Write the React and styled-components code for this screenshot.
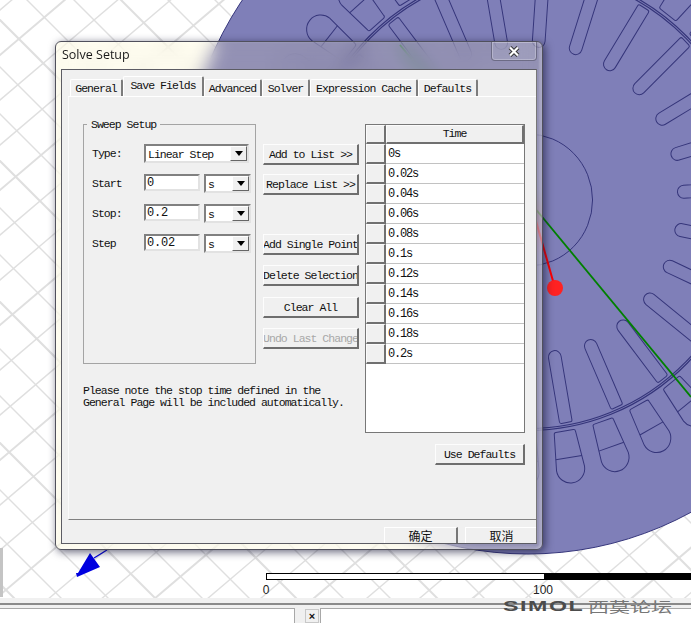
import React from 'react';
import styled, { createGlobalStyle } from 'styled-components';

const GlobalStyle = createGlobalStyle`
  html, body {
    margin: 0;
    padding: 0;
    background: #fff;
    overflow: hidden;
  }
`;

const UI_FONT = `"Liberation Mono", "Noto Sans CJK SC", monospace`;

const Screen = styled.div`
  width: 691px;
  height: 623px;
  display: flex;
  flex-direction: column;
  overflow: hidden;
  font-family: ${UI_FONT};
  font-size: 11.5px;
  letter-spacing: -0.97px;
  color: #111;
`;

const Viewport = styled.div`
  position: relative;
  height: 598px;
  flex: none;
  background: #fff;
  overflow: hidden;
`;

const ModelDrawing = styled.svg`
  display: block;
  width: 691px;
  height: 598px;
`;

const SideStub = styled.div`
  position: absolute;
  left: 0;
  top: 548px;
  width: 3px;
  height: 49px;
  background: #c4c4c4;
`;

const Scale = styled.div`
  position: absolute;
  left: 266px;
  top: 573px;
  width: 425px;
`;

const ScaleBar = styled.div`
  display: flex;
  height: 7px;
  box-sizing: border-box;
  border: 1px solid #000;
  border-right: none;
  background: #fff;
`;

const ScaleFill = styled.div`
  margin-left: 277px;
  flex: 1;
  background: #000;
`;

const ScaleLabels = styled.div`
  display: flex;
  width: 277px;
  justify-content: space-between;
  margin-top: 3px;
  font-family: "Liberation Sans", sans-serif;
  font-size: 12px;
  letter-spacing: 0;
  line-height: 14px;
  color: #222;
`;

const ScaleLabel = styled.span`
  transform: translateX(-50%);
  &:last-child { transform: translateX(50%); }
`;

const Dialog = styled.div`
  position: absolute;
  left: 55px;
  top: 41px;
  width: 488px;
  height: 509px;
  box-sizing: border-box;
  padding: 27px 5px 5px 5px;
  border: 1px solid #50505c;
  border-radius: 6px;
  background: rgba(255, 242, 160, 0.16);
  backdrop-filter: blur(9px);
  box-shadow: 2px 2px 8px rgba(20, 20, 50, 0.65), inset -3px 0 2px rgba(255, 255, 255, 0.2), inset 0 -3px 2px rgba(255, 255, 255, 0.12);
`;

const Title = styled.div`
  position: absolute;
  left: 6px;
  top: 4px;
  font-family: "Open Sans", "Noto Sans", sans-serif;
  font-size: 12.5px;
  letter-spacing: 0;
  line-height: 17px;
  color: #1a1a1a;
`;

const CloseButton = styled.div`
  position: absolute;
  right: 5px;
  top: 0;
  width: 46px;
  height: 19px;
  box-sizing: border-box;
  display: flex;
  align-items: center;
  justify-content: center;
  border: 1px solid rgba(70, 70, 90, 0.55);
  border-top: none;
  border-radius: 0 0 4px 4px;
  background: rgba(255, 255, 255, 0.1);
  box-shadow: inset 0 0 0 1px rgba(255, 255, 255, 0.25);
`;

const Client = styled.div`
  height: 100%;
  box-sizing: border-box;
  display: flex;
  flex-direction: column;
  padding: 6px 0 0 6px;
  background: #f0f0f0;
  border: 1px solid #5c5c64;
  border-right-color: #777;
  overflow: hidden;
`;

const TabStrip = styled.div`
  display: flex;
  align-items: flex-end;
  height: 20px;
  flex: none;
  padding-left: 2px;
`;

const Tab = styled.div`
  box-sizing: border-box;
  width: ${(p) => p.$width}px;
  height: ${(p) => (p.$active ? 20 : 17)}px;
  display: flex;
  align-items: ${(p) => (p.$active ? 'flex-start' : 'center')};
  justify-content: center;
  padding-top: ${(p) => (p.$active ? 2 : 0)}px;
  white-space: nowrap;
  border-top: 1px solid #fff;
  border-left: 1px solid #fff;
  border-right: 2px solid #7c7c7c;
  border-radius: 2px 2px 0 0;
`;

const TabPage = styled.div`
  height: 424px;
  flex: none;
  box-sizing: border-box;
  padding: 27px 0 0 14px;
  display: flex;
  border-top: 1px solid #fff;
  border-left: 1px solid #fafafa;
  border-bottom: 1px solid #808080;
`;

const LeftSide = styled.div`
  width: 276px;
  flex: none;
`;

const TopRow = styled.div`
  display: flex;
  gap: 7px;
`;

const Group = styled.div`
  position: relative;
  width: 173px;
  height: 240px;
  box-sizing: border-box;
  padding: 19px 0 0 8px;
  display: flex;
  flex-direction: column;
  gap: 10px;
  border: 1px solid #a4a4a4;
`;

const GroupLegend = styled.span`
  position: absolute;
  left: 3px;
  top: -7px;
  padding: 0 4px;
  background: #f0f0f0;
  line-height: 13px;
`;

const FieldRow = styled.div`
  display: flex;
  height: 20px;
`;

const FieldLabel = styled.label`
  width: 52px;
  flex: none;
  line-height: 20px;
`;

const Sunken = styled.div`
  box-sizing: border-box;
  background: #fff;
  border: 2px solid;
  border-color: #808080 #e2e2e2 #e2e2e2 #808080;
`;

const TextInput = styled(Sunken)`
  width: 56px;
  height: 17px;
  padding-left: 1px;
  line-height: 15px;
  font-size: 12px;
  letter-spacing: -0.2px;
`;

const Combo = styled(Sunken)`
  position: relative;
  width: ${(p) => p.$width}px;
  height: 19px;
  margin-left: ${(p) => p.$gap || 0}px;
  padding-left: 2px;
  line-height: 17px;
`;

const ComboArrow = styled.span`
  position: absolute;
  right: 0;
  top: 0;
  width: 17px;
  height: 15px;
  box-sizing: border-box;
  display: flex;
  align-items: center;
  justify-content: center;
  background: #f0f0f0;
  border: 1px solid;
  border-color: #fff #666 #666 #fff;
  &::after {
    content: '';
    border-style: solid;
    border-width: 5px 4px 0 4px;
    border-color: #000 transparent transparent transparent;
  }
`;

const ActionColumn = styled.div`
  width: 96px;
  padding-top: 20px;
  display: flex;
  flex-direction: column;
`;

const ActionButton = styled.div`
  box-sizing: border-box;
  width: ${(p) => p.$width || 96}px;
  height: 21px;
  flex: none;
  margin-top: ${(p) => p.$gap || 0}px;
  display: flex;
  align-items: center;
  justify-content: center;
  overflow: hidden;
  white-space: nowrap;
  color: ${(p) => (p.$disabled ? '#a8a8a8' : '#111')};
  background: #f0f0f0;
  border: 1px solid;
  border-color: #fdfdfd #6e6e6e #6e6e6e #fdfdfd;
  border-bottom-width: 2px;
  border-right-width: 2px;
`;

const Note = styled.p`
  margin: 21px 0 0;
  line-height: 12px;
  white-space: nowrap;
`;

const RightSide = styled.div`
  margin-left: 6px;
  width: 160px;
  flex: none;
  display: flex;
  flex-direction: column;
  align-items: flex-end;
`;

const TimeTable = styled.div`
  width: 160px;
  height: 309px;
  box-sizing: border-box;
  background: #fff;
  border: 1px solid #777;
`;

const TableRow = styled.div`
  display: flex;
  height: ${(p) => (p.$head ? 19 : 20)}px;
  box-sizing: border-box;
`;

const HeadCell = styled.div`
  box-sizing: border-box;
  background: #f0f0f0;
  border: 1px solid;
  border-color: #fbfbfb #707070 #707070 #fbfbfb;
  border-right-width: 2px;
  border-bottom-width: 2px;
  ${(p) => (p.$wide
    ? 'flex: 1; display: flex; align-items: center; justify-content: center; padding-bottom: 2px;'
    : 'width: 20px; flex: none;')}
`;

const TimeCell = styled.div`
  flex: 1;
  box-sizing: border-box;
  padding-left: 2px;
  line-height: 21px;
  font-size: 12px;
  letter-spacing: -1.2px;
  border-bottom: 1px solid #c2c2c2;
`;

const Footer = styled.div`
  flex: 1;
  display: flex;
  padding: 7px 0 0 316px;
  gap: 7px;
`;

const FooterButton = styled.div`
  width: ${(p) => p.$width}px;
  height: 30px;
  flex: none;
  box-sizing: border-box;
  text-align: center;
  font-family: "Noto Sans CJK SC", sans-serif;
  font-size: 12px;
  letter-spacing: 0;
  line-height: 15px;
  border-top: 1px solid #fff;
  border-left: 1px solid #fff;
  border-right: 2px solid #777;
`;

const BottomDock = styled.div`
  position: relative;
  flex: 1;
  background: #f0f0f0;
  padding-top: 5px;
`;

const DockRule = styled.div`
  height: 2px;
  background: #8a8a8a;
`;

const DockPanes = styled.div`
  display: flex;
  height: 20px;
  margin-top: 3px;
`;

const LeftPane = styled.div`
  width: 295px;
  flex: none;
  box-sizing: border-box;
  background: #fff;
  border-top: 1px solid #a8a8a8;
  border-right: 1px solid #a8a8a8;
`;

const DockClose = styled.div`
  width: 14px;
  height: 14px;
  margin: 1px 1px 0 10px;
  flex: none;
  box-sizing: border-box;
  text-align: center;
  font-family: "Liberation Sans", sans-serif;
  font-weight: bold;
  font-size: 11px;
  letter-spacing: 0;
  line-height: 12px;
  border: 1px solid #c8c8c8;
`;

const RightPane = styled.div`
  flex: 1;
  background: #fff;
  border-top: 1px solid #a8a8a8;
  border-left: 1px solid #a8a8a8;
`;

const Watermark = styled.div`
  position: absolute;
  left: 503px;
  top: 1px;
  display: flex;
  align-items: center;
  height: 14px;
`;

const WatermarkLatin = styled.span`
  width: 85px;
  font-family: "Liberation Sans", sans-serif;
  font-weight: bold;
  font-size: 15px;
  letter-spacing: 1px;
  line-height: 14px;
  color: #4c4c4c;
  transform: scaleX(1.55);
  transform-origin: left center;
`;

const WatermarkCjk = styled.span`
  font-family: "Noto Sans CJK SC", sans-serif;
  font-size: 14px;
  letter-spacing: 0;
  line-height: 14px;
  color: #777;
  transform: scaleX(1.5);
  transform-origin: left center;
`;

// the motor is seen slightly from the side, so its circles are ellipses
const CX = 528;
const CY = 200;
const SQUASH = 0.978;

const gridLines = [];
for (let i = -12; i < 32; i++) {
  const c = i * 47 + 20;
  gridLines.push({ x1: -20, y1: -20 + c, x2: 720, y2: 720 + c, w: i % 3 === 0 ? 2 : 1.4 });
}
for (let i = 0; i < 36; i++) {
  const c = i * 45 + 10;
  gridLines.push({ x1: -20, y1: c + 17, x2: 720, y2: c - 612, w: i % 3 === 1 ? 2 : 1.4 });
}

const rotorAngles = Array.from({ length: 26 }, (_, i) => 17.8 + i * 13.846);
const statorAngles = Array.from({ length: 37 }, (_, i) => 170.8 + (i - 6) * 9.86);

function Model() {
  return (
    <ModelDrawing viewBox="0 0 691 598">
      <g stroke="#dfdfdf" fill="none">
        {gridLines.map((l, i) => (
          <line key={i} x1={l.x1} y1={l.y1} x2={l.x2} y2={l.y2} strokeWidth={l.w} />
        ))}
      </g>
      <g transform={`translate(${CX} ${CY}) scale(${SQUASH} 1)`} fill="none" stroke="#35357a" strokeWidth="1">
        <circle r="354" fill="#7f7fb8" />
        <circle r="66" />
        <circle r="228.5" strokeWidth="1.2" />
        <circle r="230.5" strokeWidth="1.2" />
        {rotorAngles.map((a) => (
          <path
            key={a}
            transform={`rotate(${a})`}
            d="M-4.5 -226 Q-6.5 -226 -6.5 -224 L-6.5 -159.5 A6.5 6.5 0 0 0 6.5 -159.5 L6.5 -224 Q6.5 -226 4.5 -226 Z"
          />
        ))}
        {statorAngles.map((a) => (
          <g key={a} transform={`rotate(${a})`}>
            <path d="M-9 -234 Q-11 -234 -11 -236 L-14.5 -272 A14.5 14.5 0 0 1 14.5 -272 L11 -236 Q11 -234 9 -234 Z" />
            <line x1="-13.5" y1="-261" x2="13.5" y2="-261" />
          </g>
        ))}
      </g>
      <line x1="400" y1="45" x2="691" y2="397" stroke="#008000" strokeWidth="1.8" />
      <line x1="530" y1="200" x2="555" y2="288" stroke="#f00" strokeWidth="2" />
      <circle cx="555" cy="288" r="8" fill="#ff2222" />
      <path d="M90 553 L100 567 L77 577 L76 573 L78 573 Z" fill="#0000e0" />
      <line x1="94" y1="558" x2="107" y2="550" stroke="#0000e0" strokeWidth="1.2" />
    </ModelDrawing>
  );
}

const tabs = [
  { label: 'General', width: 53 },
  { label: 'Save Fields', width: 81, active: true },
  { label: 'Advanced', width: 58 },
  { label: 'Solver', width: 48 },
  { label: 'Expression Cache', width: 108 },
  { label: 'Defaults', width: 60 },
];

const sweepFields = [
  { label: 'Start', value: '0' },
  { label: 'Stop:', value: '0.2' },
  { label: 'Step', value: '0.02' },
];

const actions = [
  { label: 'Add to List >>' },
  { label: 'Replace List >>', gap: 9 },
  { label: 'Add Single Point', gap: 39 },
  { label: 'Delete Selection', gap: 10 },
  { label: 'Clear All', gap: 11 },
  { label: 'Undo Last Change', gap: 10, disabled: true },
];

const times = ['0s', '0.02s', '0.04s', '0.06s', '0.08s', '0.1s', '0.12s', '0.14s', '0.16s', '0.18s', '0.2s'];

export default function App() {
  return (
    <Screen>
      <GlobalStyle />
      <Viewport>
        <Model />
        <SideStub />
        <Scale>
          <ScaleBar>
            <ScaleFill />
          </ScaleBar>
          <ScaleLabels>
            <ScaleLabel>0</ScaleLabel>
            <ScaleLabel>100</ScaleLabel>
          </ScaleLabels>
        </Scale>
        <Dialog>
          <Title>Solve Setup</Title>
          <CloseButton>
            <svg width="12" height="11" viewBox="0 0 12 11">
              <path d="M2 1.5 L10 9.5 M10 1.5 L2 9.5" stroke="#333" strokeWidth="4" />
              <path d="M2 1.5 L10 9.5 M10 1.5 L2 9.5" stroke="#fff" strokeWidth="2.2" />
            </svg>
          </CloseButton>
          <Client>
            <TabStrip>
              {tabs.map((t) => (
                <Tab key={t.label} $width={t.width} $active={t.active}>{t.label}</Tab>
              ))}
            </TabStrip>
            <TabPage>
              <LeftSide>
                <TopRow>
                  <Group>
                    <GroupLegend>Sweep Setup</GroupLegend>
                    <FieldRow>
                      <FieldLabel>Type:</FieldLabel>
                      <Combo $width={105}>Linear Step<ComboArrow /></Combo>
                    </FieldRow>
                    {sweepFields.map((f) => (
                      <FieldRow key={f.label}>
                        <FieldLabel>{f.label}</FieldLabel>
                        <TextInput>{f.value}</TextInput>
                        <Combo $width={47} $gap={4}>s<ComboArrow /></Combo>
                      </FieldRow>
                    ))}
                  </Group>
                  <ActionColumn>
                    {actions.map((a) => (
                      <ActionButton key={a.label} $gap={a.gap} $disabled={a.disabled}>{a.label}</ActionButton>
                    ))}
                  </ActionColumn>
                </TopRow>
                <Note>
                  Please note the stop time defined in the<br />
                  General Page will be included automatically.
                </Note>
              </LeftSide>
              <RightSide>
                <TimeTable>
                  <TableRow $head>
                    <HeadCell />
                    <HeadCell $wide>Time</HeadCell>
                  </TableRow>
                  {times.map((t) => (
                    <TableRow key={t}>
                      <HeadCell />
                      <TimeCell>{t}</TimeCell>
                    </TableRow>
                  ))}
                </TimeTable>
                <ActionButton $width={90} $gap={11}>Use Defaults</ActionButton>
              </RightSide>
            </TabPage>
            <Footer>
              <FooterButton $width={74}>确定</FooterButton>
              <FooterButton $width={74}>取消</FooterButton>
            </Footer>
          </Client>
        </Dialog>
      </Viewport>
      <BottomDock>
        <DockRule />
        <DockPanes>
          <LeftPane />
          <DockClose>×</DockClose>
          <RightPane />
        </DockPanes>
        <Watermark>
          <WatermarkLatin>SIMOL</WatermarkLatin>
          <WatermarkCjk>西莫论坛</WatermarkCjk>
        </Watermark>
      </BottomDock>
    </Screen>
  );
}
